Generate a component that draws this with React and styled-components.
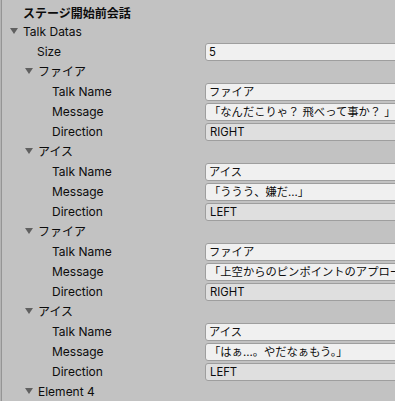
import React from "react";
import styled, { createGlobalStyle } from "styled-components";

const Global = createGlobalStyle`
  html, body { margin: 0; padding: 0; background: #c2c2c2; }
  body { width: 395px; height: 401px; overflow: hidden; }
  #root { width: 395px; height: 401px; }
`;

const Frame = styled.div`
  width: 395px;
  height: 401px;
  overflow: hidden;
  background: #c2c2c2;
  display: flex;
`;

const EdgeStrip = styled.div`
  width: 1px;
  flex: none;
  background: #b4b4b4;
`;

const Panel = styled.div`
  flex: 1;
  border-left: 1px solid #959595;
  padding-top: 5px;
  display: flex;
  flex-direction: column;
  gap: 2px;
  font-family: Inter, "Noto Sans CJK JP", sans-serif;
  font-size: 12px;
  color: #0c0c0c;
  min-width: 0;
`;

const Row = styled.div`
  height: 18px;
  display: flex;
  align-items: center;
  flex: none;
`;

const TitleRow = styled(Row)`
  margin-bottom: -2px;
`;

const Label = styled.div`
  width: 203px;
  flex: none;
  box-sizing: border-box;
  padding-left: ${(p) => p.$indent}px;
  font-weight: ${(p) => (p.$bold ? 700 : 400)};
  white-space: nowrap;
  display: flex;
  align-items: center;
  line-height: 18px;
`;

const Arrow = styled.span`
  width: 13px;
  flex: none;
  display: flex;
  align-items: center;
  height: 18px;
  &::before {
    content: "";
    display: block;
    width: 0;
    height: 0;
    margin-top: -2px;
    border-left: 4px solid transparent;
    border-right: 4px solid transparent;
    border-top: 6px solid #606060;
  }
`;

const Field = styled.div`
  width: 210px;
  flex: none;
  height: 18px;
  box-sizing: border-box;
  border: 1px solid #9e9e9e;
  border-radius: 3px;
  background: ${(p) => (p.$enum ? "#dfdfdf" : "#f0f0f0")};
  padding-left: ${(p) => (p.$enum ? 4 : 3)}px;
  font-family: Inter, "Noto Sans CJK JP", sans-serif;
  font-size: 11.3px;
  line-height: 16px;
  color: #0c0c0c;
  white-space: nowrap;
  overflow: hidden;
`;

const elements = [
  { name: "ファイア", message: "「なんだこりゃ？ 飛べって事か？ 」", dir: "RIGHT" },
  { name: "アイス", message: "「ううう、嫌だ…」", dir: "LEFT" },
  { name: "ファイア", message: "「上空からのピンポイントのアプローチか」", dir: "RIGHT" },
  { name: "アイス", message: "「はぁ…。やだなぁもう。」", dir: "LEFT" },
];

function Foldout({ indent, children }) {
  return (
    <Row>
      <Label $indent={indent}>
        <Arrow />
        {children}
      </Label>
    </Row>
  );
}

function Prop({ label, value, enumField }) {
  return (
    <Row>
      <Label $indent={50}>{label}</Label>
      <Field $enum={enumField}>{value}</Field>
    </Row>
  );
}

export default function App() {
  return (
    <>
      <Global />
      <Frame>
        <EdgeStrip />
        <Panel>
          <TitleRow>
            <Label $indent={21} $bold>ステージ開始前会話</Label>
          </TitleRow>
          <Foldout indent={8}>Talk Datas</Foldout>
          <Row>
            <Label $indent={35}>Size</Label>
            <Field>5</Field>
          </Row>
          {elements.map((e, i) => (
            <React.Fragment key={i}>
              <Foldout indent={23}>{e.name}</Foldout>
              <Prop label="Talk Name" value={e.name} />
              <Prop label="Message" value={e.message} />
              <Prop label="Direction" value={e.dir} enumField />
            </React.Fragment>
          ))}
          <Foldout indent={23}>Element 4</Foldout>
        </Panel>
      </Frame>
    </>
  );
}
